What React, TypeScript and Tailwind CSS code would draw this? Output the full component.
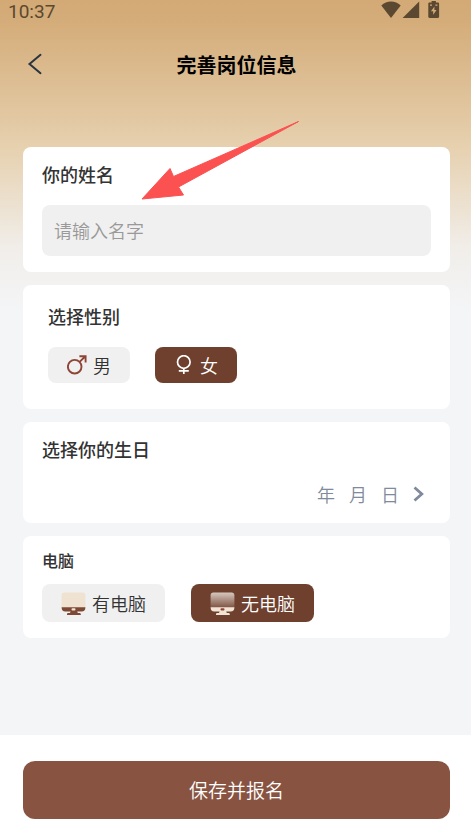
import React, { useState } from 'react';

interface Option {
  value: string;
  label: string;
  icon: (active: boolean) => React.ReactNode;
}

interface OptionGroupProps {
  name: string;
  options: Option[];
  value: string;
  onChange: (value: string) => void;
  className?: string;
  itemClassName?: string;
}

const StatusBar: React.FC = () => (
  <div className="flex h-6 items-start justify-between pl-2 pr-[31px] text-[#5b4831]">
    <span className="font-['Roboto',sans-serif] text-[19px] leading-[23px]">10:37</span>
    <div className="flex items-center">
      <svg className="h-5 w-5" viewBox="0 0 20 20" fill="currentColor" aria-hidden="true">
        <path d="M.3 5.600C5.600.2 14.400.2 19.700 5.600L10 18Z" />
      </svg>
      <svg className="ml-[1px] h-5 w-[18px]" viewBox="0 0 18 20" fill="currentColor" aria-hidden="true">
        <path d="M17.200 1.500V18H.6Z" />
      </svg>
      <svg className="ml-2 h-5 w-3" viewBox="0 0 12 20" fill="currentColor" aria-hidden="true">
        <path
          fillRule="evenodd"
          d="M3.600 1h4.300v1.600h2c.7 0 1.200.5 1.200 1.200v13c0 .7-.5 1.200-1.200 1.200H1.500c-.7 0-1.200-.5-1.200-1.200v-13c0-.7.5-1.200 1.200-1.200h2.100ZM6.400 6.500 3 11.200h2.200v3.600L8.500 10H6.400ZM2 4.500v1.200h2V4.500ZM7.400 4.500v1.200h2V4.500Z"
        />
      </svg>
    </div>
  </div>
);

const MaleIcon: React.FC = () => (
  <svg className="h-5 w-5 shrink-0" viewBox="0 0 20 20" fill="none" stroke="#8f4536" strokeWidth="1.900" aria-hidden="true">
    <circle cx="7.700" cy="11.700" r="6.800" />
    <path d="M12.600 6.900 18.400 1.200M12.400 1.200h6.200v6.200" />
  </svg>
);

const FemaleIcon: React.FC = () => (
  <svg className="h-5 w-5 shrink-0" viewBox="0 0 20 20" fill="none" stroke="#ffffff" strokeWidth="1.700" aria-hidden="true">
    <circle cx="9.800" cy="7" r="6.300" />
    <path d="M9.800 13v6M4.800 15.900h10" />
  </svg>
);

const ComputerIcon: React.FC<{ active: boolean }> = ({ active }) => (
  <svg className="h-[25px] w-[25px] shrink-0" viewBox="0 0 25 25" aria-hidden="true">
    <defs>
      <linearGradient id="screen-fade" x1="0" y1="0" x2="0" y2="1">
        <stop offset="0" stopColor="#d6c8bf" />
        <stop offset="1" stopColor="#7d5040" />
      </linearGradient>
    </defs>
    <path d="M3.300 1.500h18.400c1.600 0 2.700 1.100 2.700 2.700V17H.6V4.200c0-1.600 1.100-2.700 2.700-2.700Z" fill={active ? 'url(#screen-fade)' : '#f0e2d1'} />
    <path
      d="M.6 16.200h23.800c0 2.900-1.300 4.400-3.700 4.400h-4.500l.6 1.300h1.700c.9 0 1.300.6 1.300 1.200v.9H6v-.9c0-.6.4-1.200 1.300-1.200H9l.6-1.300H4.300C1.900 20.600.6 19.100.6 16.200Z"
      fill={active ? '#f2e4d5' : '#7d4934'}
    />
    <rect x="10.500" y="17.200" width="4" height="2.400" rx="1" fill={active ? '#8f4536' : '#f2e4d5'} />
  </svg>
);

const Card: React.FC<{ className?: string; children: React.ReactNode }> = ({ className = '', children }) => (
  <section className={`rounded-lg bg-white ${className}`}>{children}</section>
);

const OptionGroup: React.FC<OptionGroupProps> = ({ name, options, value, onChange, className = '', itemClassName = '' }) => (
  <div className={`flex ${className}`}>
    {options.map((option) => {
      const active = option.value === value;
      return (
        <label
          key={option.value}
          className={`relative flex cursor-pointer items-center gap-1.5 rounded-lg px-[19px] text-lg leading-6 font-[350] ${itemClassName} ${
            active ? 'bg-[#6f402e] text-white' : 'bg-[#f0f0f0] text-[#333333]'
          }`}
        >
          <input
            type="radio"
            name={name}
            value={option.value}
            checked={active}
            onChange={() => onChange(option.value)}
            className="sr-only"
          />
          {option.icon(active)}
          <span>{option.label}</span>
        </label>
      );
    })}
  </div>
);

const genderOptions: Option[] = [
  { value: 'male', label: '男', icon: () => <MaleIcon /> },
  { value: 'female', label: '女', icon: () => <FemaleIcon /> },
];

const computerOptions: Option[] = [
  { value: 'yes', label: '有电脑', icon: (active) => <ComputerIcon active={active} /> },
  { value: 'no', label: '无电脑', icon: (active) => <ComputerIcon active={active} /> },
];

const App: React.FC = () => {
  const [name, setName] = useState('');
  const [gender, setGender] = useState('female');
  const [computer, setComputer] = useState('no');

  return (
    <div className="flex min-h-screen flex-col bg-[#f4f5f7] bg-[linear-gradient(180deg,#d3aa76_0px,#d4ac79_20px,#e6d0ae_145px,#f1eeea_250px,#f4f5f7_310px)] font-['Noto_Sans_CJK_SC',sans-serif] text-[#333333]">
      <StatusBar />

      {/* Header */}
      <header className="grid h-[82px] grid-cols-[50px_1fr_48px] items-center">
        <button type="button" aria-label="返回" className="flex h-12 items-center justify-end pr-1.5">
          <svg className="h-6 w-5" viewBox="0 0 20 24" fill="none" stroke="#2b3441" strokeWidth="2" strokeLinecap="round" aria-hidden="true">
            <path d="M16.500 1.800 5.500 11l11 9.200" />
          </svg>
        </button>
        <h1 className="text-center text-xl font-bold text-black">完善岗位信息</h1>
      </header>

      <main className="flex flex-1 flex-col gap-[13px] pt-[41px] pr-[21px] pl-[23px]">
        {/* Name */}
        <Card className="relative px-[19px] pt-[15px] pb-4">
          <label htmlFor="name" className="block text-lg leading-6 font-medium">
            你的姓名
          </label>
          <input
            id="name"
            type="text"
            value={name}
            onChange={(e) => setName(e.target.value)}
            placeholder="请输入名字"
            className="mt-[19px] block h-[51px] w-full rounded-lg bg-[#f0f0f0] px-3 pb-0.5 text-lg font-[350] outline-none placeholder:text-[#999999]"
          />
          <svg
            className="pointer-events-none absolute -top-7 left-[117px] h-[84px] w-40"
            viewBox="0 0 160 84"
            fill="#fb5151"
            stroke="#fb5151"
            strokeWidth="1"
            strokeLinejoin="round"
            aria-hidden="true"
          >
            <path d="M2 80 30 49.500 33.500 57.500 158.500 2.500 38.500 68 43.500 76Z" />
          </svg>
        </Card>

        {/* Gender */}
        <Card className="px-[25px] pt-[19px] pb-[26px]">
          <fieldset>
            <legend className="text-lg leading-6 font-medium">选择性别</legend>
            <OptionGroup
              name="gender"
              options={genderOptions}
              value={gender}
              onChange={setGender}
              className="mt-[19px] gap-[25px]"
              itemClassName="h-9"
            />
          </fieldset>
        </Card>

        {/* Birthday */}
        <Card className="px-[19px] pt-[15px] pb-[17px]">
          <h2 id="birthday" className="text-lg leading-6 font-medium">
            选择你的生日
          </h2>
          <button
            type="button"
            aria-labelledby="birthday"
            className="mt-[21px] ml-auto flex items-center gap-3.5 pr-1.5 text-lg leading-6 font-[350] text-[#7f8a9a]"
          >
            <span>年</span>
            <span>月</span>
            <span>日</span>
            <svg className="h-4 w-3" viewBox="0 0 12 16" fill="none" stroke="currentColor" strokeWidth="2.800" aria-hidden="true">
              <path d="M1.500 1.500 8.800 8 1.500 14.500" />
            </svg>
          </button>
        </Card>

        {/* Computer */}
        <Card className="px-[19px] pt-3 pb-4">
          <fieldset>
            <legend className="text-base leading-6 font-medium">电脑</legend>
            <OptionGroup
              name="computer"
              options={computerOptions}
              value={computer}
              onChange={setComputer}
              className="mt-3 gap-[26px]"
              itemClassName="h-[38px]"
            />
          </fieldset>
        </Card>
      </main>

      {/* Submit */}
      <footer className="bg-white pt-[26px] pr-[21px] pb-[18px] pl-[23px]">
        <button type="submit" className="h-[58px] w-full rounded-xl bg-[#885441] text-[19px] font-[350] text-white">
          保存并报名
        </button>
      </footer>
    </div>
  );
};

export default App;
